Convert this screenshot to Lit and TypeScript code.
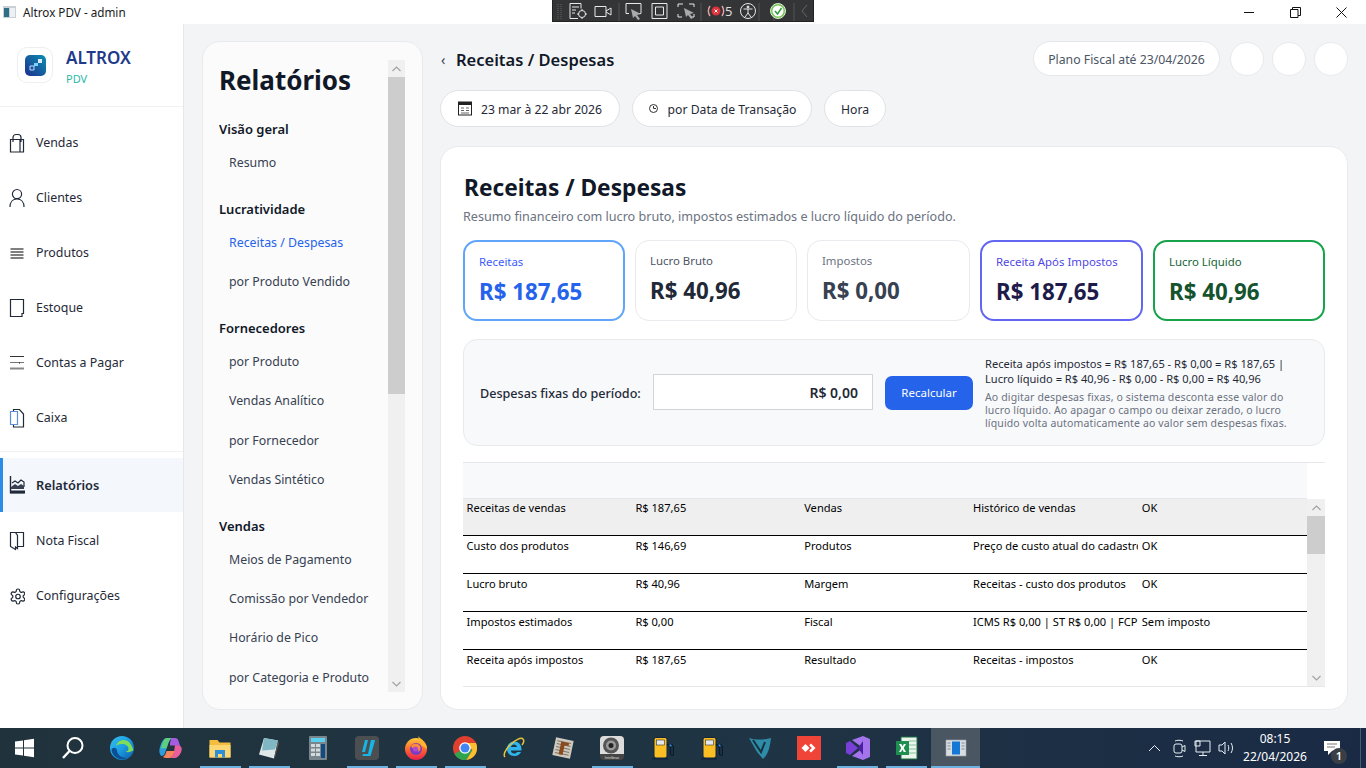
import { LitElement, html, css, svg } from 'lit';
import { customElement } from 'lit/decorators.js';

const line = (d: string, w = 1.2, c = '#1f2937') =>
  svg`<path d=${d} fill="none" stroke=${c} stroke-width=${w} />`;

const navIcons: Record<string, unknown> = {
  bag: svg`${line('M1.5 6.5h13v12.5h-13zM11 6.5v12.5M4 9V4.5a3 3 0 0 1 3-3h2a3 3 0 0 1 3 3V9')}`,
  user: svg`${line('M8 1.5a4.6 4.6 0 1 1 0 9.2a4.6 4.6 0 1 1 0-9.2zM1 19c0-5 3-8 7-8s7 3 7 8')}`,
  list: svg`${line('M1.500 6h13M1.500 9h13M1.500 12h13M1.500 15h13', 1.3, '#555')}`,
  box: svg`${line('M1.500 1.500h13v14l-1.500 0v3h-11.500zM10 18.500h3v-3', 1.2)}`,
  lines: svg`${line('M1 3.500h14', 1, '#333')}${line('M1 9.500h14', 1, '#777')}${line('M10 10h1', 1, '#111')}${line('M1 15.500h14', 2, '#888')}`,
  docs: svg`${line('M4.500 3.500v-2h6l4 4.500v13h-10v-2', 1.2)}${line('M1.500 3.500h7v13h-7z', 1.2, '#5b8fd8')}`,
  chart: svg`${line('M1.500 1v16.500h14', 1.4)}${line('M3 8l3-2 3 2 3-3 3 2v5', 1.2)}<path d="M2 12l4-3 3 2 3-2 3 2v3h-13z" fill="#374151" /><path d="M1 15.500h15v3h-15z" fill="#1f2937" />`,
  book: svg`${line('M1.500 1.500h5l2 3v13l-2-1.500v2.500l-5-3zM6.500 1.500h8v14h-6', 1.2)}`,
  gear: svg`<g transform="scale(.75) translate(0 2)"><path d="M12.22 2h-.44a2 2 0 0 0-2 2v.18a2 2 0 0 1-1 1.73l-.43.25a2 2 0 0 1-2 0l-.15-.08a2 2 0 0 0-2.73.73l-.22.38a2 2 0 0 0 .73 2.73l.15.1a2 2 0 0 1 1 1.72v.51a2 2 0 0 1-1 1.74l-.15.09a2 2 0 0 0-.73 2.73l.22.38a2 2 0 0 0 2.73.73l.15-.08a2 2 0 0 1 2 0l.43.25a2 2 0 0 1 1 1.73V20a2 2 0 0 0 2 2h.44a2 2 0 0 0 2-2v-.18a2 2 0 0 1 1-1.73l.43-.25a2 2 0 0 1 2 0l.15.08a2 2 0 0 0 2.73-.73l.22-.39a2 2 0 0 0-.73-2.73l-.15-.08a2 2 0 0 1-1-1.74v-.5a2 2 0 0 1 1-1.74l.15-.09a2 2 0 0 0 .73-2.73l-.22-.38a2 2 0 0 0-2.73-.73l-.15.08a2 2 0 0 1-2 0l-.43-.25a2 2 0 0 1-1-1.73V4a2 2 0 0 0-2-2z" fill="none" stroke="#1f2937" stroke-width="1.6" /><circle cx="12" cy="12" r="3" fill="none" stroke="#1f2937" stroke-width="1.6" /></g>`,
};

const navTop = [
  ['bag', 'Vendas'],
  ['user', 'Clientes'],
  ['list', 'Produtos'],
  ['box', 'Estoque'],
  ['lines', 'Contas a Pagar'],
  ['docs', 'Caixa'],
];
const navBottom = [
  ['chart', 'Relatórios', 'active'],
  ['book', 'Nota Fiscal'],
  ['gear', 'Configurações'],
];

const reportGroups = [
  { title: 'Visão geral', items: ['Resumo'] },
  { title: 'Lucratividade', items: ['Receitas / Despesas', 'por Produto Vendido'] },
  { title: 'Fornecedores', items: ['por Produto', 'Vendas Analítico', 'por Fornecedor', 'Vendas Sintético'] },
  { title: 'Vendas', items: ['Meios de Pagamento', 'Comissão por Vendedor', 'Horário de Pico', 'por Categoria e Produto'] },
];

const stats = [
  { cls: 'blue', label: 'Receitas', value: 'R$ 187,65' },
  { cls: '', label: 'Lucro Bruto', value: 'R$ 40,96' },
  { cls: 'muted', label: 'Impostos', value: 'R$ 0,00' },
  { cls: 'indigo', label: 'Receita Após Impostos', value: 'R$ 187,65' },
  { cls: 'green', label: 'Lucro Líquido', value: 'R$ 40,96' },
];

const rows = [
  ['Receitas de vendas', 'R$ 187,65', 'Vendas', 'Histórico de vendas', 'OK'],
  ['Custo dos produtos', 'R$ 146,69', 'Produtos', 'Preço de custo atual do cadastro', 'OK'],
  ['Lucro bruto', 'R$ 40,96', 'Margem', 'Receitas - custo dos produtos', 'OK'],
  ['Impostos estimados', 'R$ 0,00', 'Fiscal', 'ICMS R$ 0,00 | ST R$ 0,00 | FCP R$ 0,00', 'Sem imposto'],
  ['Receita após impostos', 'R$ 187,65', 'Resultado', 'Receitas - impostos', 'OK'],
];

const pump = svg`<path d="M2 22h16v1.500h-16z" fill="#10243c" /><rect x="4" y="1.500" width="13" height="20.500" rx="2" fill="#fbbf24" stroke="#10243c" /><rect x="6.500" y="4" width="8" height="5" fill="#e5e7eb" stroke="#333" stroke-width=".6" /><path d="M17 8l3.500 3v7a1.500 1.500 0 0 0 3 0v-7l-2-3" fill="none" stroke="#0b1a2c" stroke-width="1.200" /><circle cx="20.500" cy="9.500" r="1.100" fill="#2b8de8" />`;

const taskIcons: { run?: boolean; icon: unknown; active?: boolean }[] = [
  { icon: svg`<path d="M3 5.500l8-1.100v7.200h-8zM12 4.200l10-1.400v8.800h-10zM3 12.500h8v7.100l-8-1.100zM12 12.500h10v8.700l-10-1.400z" fill="#fff" />` },
  { icon: svg`<circle cx="14" cy="9.500" r="7.500" fill="none" stroke="#fff" stroke-width="2" /><path d="M8.500 15l-6.500 7" stroke="#fff" stroke-width="2.400" />` },
  { icon: svg`<defs><linearGradient id="ed" x1="0" y1="0" x2="1" y2="1"><stop offset="0" stop-color="#35c1f1" /><stop offset=".5" stop-color="#1b9de2" /><stop offset="1" stop-color="#0c59a4" /></linearGradient></defs><circle cx="12" cy="12" r="12" fill="url(#ed)" /><path d="M6 10c1-6 9-8 13-4 3 3 4 7 4.500 8-2 2-6 3-8 1.500 2 0 3-1 3-3 0-3-4-5-7.500-4.500-2 .3-4.500 1-5 2z" fill="#7edb5b" /><path d="M7 14c0 5 5 8.500 10 7.500-5 4-15 .5-15.500-8 1-2 4-3 5.500.5z" fill="#0d4f94" />` },
  { icon: svg`<path d="M8 2h5c-2 1-3 3-4 6l-3 9c-.5 2-2 3-3.500 3C0 18 0 14 1 11c1.500-5 3.500-9 7-9z" fill="#2d9cdb" /><path d="M8 2h5c-2 1-3 3-4 6l-1.500 4.500c-2-.5-4-.5-5.500 0C3 7 5 2 8 2z" fill="#5fce7c" /><path d="M12 2h4c2 0 3 1 3.500 3 .8 2 1.500 4 2 6-1-1-3-1.500-5.500-1.500h-5L11 7c.5-2 1-4 1-5z" fill="#a45de0" /><path d="M16 9c3 0 6 1 6.500 2.500.8 3-1 7-3.500 9-1 1-2.500 1.500-4 1.500h-4c2-1 3.500-3 4-6z" fill="#e85d9b" /><path d="M11 22c2-1 3.500-3 4.500-7h-8c-.5 3-2 5-3.500 6 1 .7 2 1 3 1z" fill="#f6845d" />` },
  { run: true, icon: svg`<path d="M1.500 4h8l2 2.500h11v15h-21z" fill="#f4bd3f" /><path d="M1.500 9h21v12.500h-21z" fill="#fcd774" /><path d="M7 14h10v7.500h-3v-3.500h-4v3.500h-3z" fill="#2e8fd6" />` },
  { run: true, icon: svg`<path d="M7 2l14 2.500-4 18-15-4z" fill="#dfe9ea" /><path d="M7 2l14 2.500-3 9-13 1z" fill="#7fb8c4" /><path d="M21 4.500l1 3-4 14-1 1z" fill="#5d5547" />` },
  { icon: svg`<rect x="3" y="0" width="18" height="24" rx="1" fill="#79868e" /><rect x="5" y="2" width="14" height="4" fill="#5bd0ee" /><path d="M5 8h4v3h-4zM10 8h4v3h-4zM5 12.500h4v3h-4zM10 12.500h4v3h-4zM5 17h4v3h-4zM10 17h4v3h-4z" fill="#d4d9dc" /><path d="M15 8h4v14h-4z" fill="#134a82" />` },
  { run: true, icon: svg`<rect width="24" height="24" rx="4" fill="#4c4f52" /><path d="M10 4h3l-3 12h-3zM16 4h4l-1 4-3.500 12h-8l.5-2h5z" fill="#14b8e8" />` },
  { run: true, icon: svg`<defs><linearGradient id="ff" x1="0" y1="0" x2="0" y2="1"><stop offset="0" stop-color="#ffcb3d" /><stop offset=".5" stop-color="#ff6a2b" /><stop offset="1" stop-color="#e8214f" /></linearGradient></defs><circle cx="12" cy="13" r="11" fill="url(#ff)" /><path d="M14 0c3 3 9 7 9 13l-6-4z" fill="#ffb52d" /><circle cx="12" cy="13" r="6" fill="#7b3bc4" /><path d="M7 10c2-3 7-3 9 0 1 2 .5 5-2 6 1-2 0-4-2-4-2.500 0-3 1.500-5-2z" fill="#ff8a3a" /><circle cx="11.500" cy="13" r="2.600" fill="#b04bd0" />` },
  { run: true, icon: svg`<circle cx="12" cy="12" r="12" fill="#e0402f" /><path d="M12 12l-10.500 6a12 12 0 0 0 12 6l6-10z" fill="#2fa44f" /><path d="M12 7h11a12 12 0 0 1-9.500 17l6-10z" fill="#fbc02d" /><circle cx="12" cy="12" r="5.800" fill="#fff" /><circle cx="12" cy="12" r="4.500" fill="#4285f4" />` },
  { icon: svg`<path d="M12 5.500a7 7 0 0 0-7 7.500c0 4 3 7 7.500 7 3.500 0 5.500-1.800 6.500-4h-4c-.7 1-1.500 1.500-2.800 1.500-1.800 0-3.200-1-3.300-3h10.500c.6-5.500-2.900-9-6.900-9zM9 11c.2-1.500 1.500-2.500 3-2.500s2.800 1 3 2.500z" fill="#2fb5ec" /><path d="M3 21c-2-2 0-7 5-12 5-5 11-8 13-6 1.500 1.500 .5 4-1 6" fill="none" stroke="#e8c33a" stroke-width="1.500" />` },
  { icon: svg`<g transform="rotate(12 12 12)"><rect x="3" y="3" width="18" height="18" fill="#cfc9bd" /><path d="M5 6h14M5 9h14M5 12h14M5 15h14M5 18h14" stroke="#7c756a" /><path d="M9 6h8v3h-4v10h-4z" fill="#8a4a1c" /></g>` },
  { run: true, icon: svg`<rect x="0" y="0" width="24" height="24" rx="4" fill="#444" /><path d="M0 4a4 4 0 0 1 4-4h16a4 4 0 0 1 4 4v14h-24z" fill="#dcdcdc" /><circle cx="11" cy="9.500" r="8" fill="#555" /><circle cx="11" cy="9.500" r="5" fill="#9a9a9a" /><circle cx="11" cy="9.500" r="2.500" fill="#222" /><text x="12" y="22.800" text-anchor="middle" font-size="3.800" fill="#ddd" font-family="Liberation Sans, sans-serif">Intelbras</text>` },
  { icon: pump },
  { icon: pump },
  { icon: svg`<path d="M1 2c7 2 15 2 22 0-1 9-3 17-8 21l-6-7z" fill="#2f8ca8" /><path d="M5 4l8 12 4-10" fill="none" stroke="#16323f" stroke-width="2" />` },
  { icon: svg`<rect width="24" height="24" fill="#f04438" /><path d="M8.500 8l4 4-4 4-4-4z" fill="#fff" /><path d="M14 7.500l4.500 4.500-4.500 4.500-1.800-1.800 2.700-2.700-2.700-2.700z" fill="#fff" />` },
  { run: true, icon: svg`<path d="M0 7l4-2 8 7-8 7-4-2z" fill="#7a3fd8" /><path d="M6 4l11-4 7 3v18l-7 3-11-4 11-8z" fill="#a374ec" /><path d="M12 12l5-7v14z" fill="#4b1fa0" />` },
  { run: true, icon: svg`<path d="M6 1h16v22h-16z" fill="#eaf5ec" stroke="#1d6f42" /><path d="M14 5h7M14 9h7M14 13h7M14 17h7" stroke="#88bf9b" /><path d="M1 5h13v14h-13z" fill="#1f8f4f" /><path d="M4 8h2.300l1.300 2.300 1.300-2.300h2.100l-2.300 4 2.300 4h-2.300l-1.300-2.400-1.400 2.400h-2l2.300-4z" fill="#fff" />` },
  { run: true, active: true, icon: svg`<rect x="2" y="4" width="20" height="16" fill="#d8dde2" stroke="#99a3ad" stroke-width=".6" /><rect x="8" y="5.500" width="8" height="13" fill="#1478d4" /><path d="M3.500 7h3M3.500 10h3M3.500 13h3M17.500 7h3M17.500 10h3M17.500 13h3" stroke="#7f8a94" />` },
];

@customElement('app-root')
export class AppRoot extends LitElement {
  static styles = css`
    :host {
      display: flex;
      flex-direction: column;
      position: relative;
      width: 1366px;
      height: 768px;
      overflow: hidden;
      font-family: "Noto Sans", "Open Sans", sans-serif;
      color: #111827;
      background: #f3f4f6;
    }
    * { box-sizing: border-box; }

    .titlebar {
      height: 24px;
      flex: none;
      background: #fff;
      display: flex;
      align-items: center;
      font-size: 11.700px;
      padding-left: 3px;
      gap: 7px;
      color: #1a1a1a;
    }
    .winicon { width: 13px; height: 12px; }
    .winbtns { margin-left: auto; display: flex; padding-right: 2px; }
    .winbtn { width: 46px; height: 24px; display: flex; align-items: center; justify-content: center; }

    .recorder {
      position: absolute;
      left: 552px;
      top: 0;
      width: 262px;
      height: 22px;
      background: #333537;
      border: 1px solid #222;
      border-top: none;
    }
    .recorder svg { display: block; }

    .body { flex: 1; display: flex; min-height: 0; }

    .side {
      width: 184px;
      flex: none;
      background: #fff;
      border-right: 1px solid #e5e7eb;
    }
    .brand {
      height: 83px;
      border-bottom: 1px solid #f0f1f3;
      display: flex;
      align-items: center;
      padding-left: 17px;
      gap: 13px;
    }
    .logo {
      width: 36px;
      height: 36px;
      border: 1px solid #eceef1;
      border-radius: 10px;
      display: flex;
      align-items: center;
      justify-content: center;
    }
    .brandtext { padding-top: 4px; }
    .brand b { display: block; font-size: 17px; line-height: 22px; font-weight: 600; color: #1e3a8a; margin-top: -2px; }
    .brand span { display: block; font-size: 11px; line-height: 14px; color: #2bb8a8; margin-top: 3px; }
    .nav { padding-top: 8px; }
    .nav.low { border-top: 1px solid #f0f1f3; margin-top: 6px; padding-top: 6px; }
    .navitem {
      height: 55px;
      display: flex;
      align-items: center;
      padding-left: 9px;
      gap: 11px;
      font-size: 12.400px;
      color: #1f2937;
    }
    .navitem svg { flex: none; }
    .navitem.active {
      height: 54px;
      margin-bottom: 1px;
      background: #f4f7fc;
      border-left: 3px solid #2b8de8;
      padding-left: 6px;
      font-size: 12.800px;
      font-weight: 600;
    }

    .content { flex: 1; display: flex; gap: 17px; padding: 17px 18px 18px; min-width: 0; }

    .reports {
      width: 221px;
      flex: none;
      background: #fbfbfc;
      border: 1px solid #e8eaed;
      border-radius: 18px;
      padding: 18px 17px 17px 16px;
      display: flex;
    }
    .replist { flex: 1; overflow: hidden; min-width: 0; }
    .replist h1 { margin: 1px 0 0; font-size: 26px; line-height: 38px; font-weight: 700; color: #111827; }
    .group { margin-top: 17.200px; }
    .group:first-of-type { margin-top: 20px; }
    .group h2 { margin: 0 0 3.500px; font-size: 13px; line-height: 20px; font-weight: 600; color: #111827; }
    .repitem {
      height: 39.300px;
      display: flex;
      align-items: center;
      padding-left: 10px;
      font-size: 12.350px;
      color: #374151;
      white-space: nowrap;
    }
    .repitem.on { color: #2563eb; }

    .sbar { width: 17px; flex: none; background: #f0f0f0; display: flex; flex-direction: column; align-items: center; }
    .sbar .arrow { height: 17px; flex: none; display: flex; align-items: center; justify-content: center; width: 100%; }
    .sbar .thumb { width: 100%; background: #cdcdcd; flex: none; }
    .sbar .fill { flex: 1; }

    .main { flex: 1; display: flex; flex-direction: column; min-width: 0; }
    .top { height: 35px; display: flex; align-items: center; flex: none; }
    .back { width: 16px; font-size: 14px; color: #374151; padding: 2px 0 0 1px; }
    .top h2 { margin: 0; padding-top: 2px; font-size: 16.500px; font-weight: 600; color: #111827; }
    .plan {
      margin-left: auto;
      height: 35px;
      width: 187px;
      justify-content: center;
      padding-top: 2px;
      display: flex;
      align-items: center;
      background: #fff;
      border: 1px solid #e5e7eb;
      border-radius: 18px;
      font-size: 12.250px;
      color: #4b5563;
    }
    .circle { width: 34px; height: 34px; border-radius: 50%; background: #fff; border: 1px solid #e8eaed; margin-left: 8px; flex: none; }
    .plan + .circle { margin-left: 10px; }

    .filters { display: flex; gap: 12px; margin-top: 14px; flex: none; }
    .pill {
      height: 37px;
      display: flex;
      align-items: center;
      justify-content: center;
      gap: 9px;
      padding-top: 2px;
      background: #fff;
      border: 1px solid #dfe2e6;
      border-radius: 19px;
      font-size: 12.200px;
      color: #1f2937;
    }
    .pill svg { margin-top: -2px; }
    .pill.a { width: 180px; }
    .pill.b { width: 180px; }
    .pill.c { width: 62px; }

    .card {
      flex: 1;
      margin-top: 19px;
      background: #fff;
      border: 1px solid #e8eaed;
      border-radius: 18px;
      padding: 25px 22px 22px;
      min-height: 0;
    }
    .card h3 { margin: 0 0 0 1px; font-size: 22.700px; line-height: 32px; font-weight: 700; color: #111827; }
    .sub { margin: 4px 0 0; font-size: 12.600px; line-height: 18px; color: #6b7280; }

    .stats { display: grid; grid-template-columns: 162px 162px 163px 163px 172px; gap: 10px; margin-top: 14px; }
    .stat {
      height: 81px;
      border: 1px solid #e8eaed;
      border-radius: 14px;
      padding: 11px 14px;
    }
    .stat .l { font-size: 11.400px; line-height: 17px; color: #4b5563; }
    .stat .v { font-size: 22.300px; line-height: 30px; font-weight: 700; color: #1f2937; margin-top: 7px; }
    .stat.muted .l { color: #6b7280; }
    .stat.muted .v { color: #374151; }
    .stat.blue { border: 2px solid #60a5fa; }
    .stat.blue .l { color: #3b5bfd; }
    .stat.blue .v { color: #2563eb; }
    .stat.indigo { border: 2px solid #6366f1; }
    .stat.indigo .l { color: #4f46e5; }
    .stat.indigo .v { color: #1e1b4b; }
    .stat.green { border: 2px solid #16a34a; }
    .stat.green .l { color: #166534; }
    .stat.green .v { color: #14532d; }

    .fixed {
      height: 107px;
      margin-top: 18px;
      background: #f8f9fb;
      border: 1px solid #e8eaed;
      border-radius: 14px;
      display: flex;
      align-items: center;
      padding: 0 16px;
    }
    .fixed label { font-size: 12.600px; font-weight: 500; color: #1f2937; white-space: nowrap; width: 173px; flex: none; padding-top: 2px; }
    .field {
      width: 220px;
      height: 36px;
      flex: none;
      margin-top: -1px;
      background: #fff;
      border: 1px solid #d1d5db;
      display: flex;
      align-items: center;
      justify-content: flex-end;
      padding-right: 14px;
      font-size: 14px;
      font-weight: 600;
      color: #1f2937;
    }
    .recalc {
      width: 88px;
      height: 34px;
      flex: none;
      margin-left: 12px;
      background: #2563eb;
      color: #fff;
      border: none;
      border-radius: 7px;
      font: inherit;
      font-size: 11.500px;
    }
    .calc { margin-left: 12px; width: 310px; flex: none; padding-top: 1px; }
    .calc p { margin: 0; font-size: 11.100px; line-height: 15px; color: #1f2937; white-space: nowrap; }
    .calc small { display: block; margin-top: 5px; font-size: 10.500px; letter-spacing: .14px; line-height: 13px; color: #6b7280; }

    .grid {
      height: 225px;
      margin-top: 16px;
      border-top: 1px solid #e5e7eb;
      border-bottom: 1px solid #e5e7eb;
      display: flex;
      overflow: hidden;
    }
    table { width: 844px; flex: none; table-layout: fixed; border-collapse: separate; border-spacing: 0; font-size: 11.100px; color: #000; }
    thead th { height: 36px; background: #f8f9fb; border-bottom: 1px solid #e5e7eb; padding: 0; }
    tbody td {
      height: 38px;
      padding: 2px 3px 0 3.600px;
      line-height: 16px;
      vertical-align: top;
      white-space: nowrap;
      overflow: hidden;
      border-bottom: 1px solid #000;
    }
    tbody tr:first-child td { height: 37px; padding-top: 1px; background: #efefef; }
    tbody tr:last-child td { border-bottom: none; }
    .gridbar { width: 18px; flex: none; display: flex; flex-direction: column; }
    .gridbar .blank { height: 36px; flex: none; }
    .gridbar .sbar { flex: 1; width: 18px; }

    .taskbar {
      height: 40px;
      flex: none;
      background: linear-gradient(90deg, #20333d 0%, #1f3444 55%, #1a2a45 100%);
      display: flex;
      color: #fff;
    }
    .task {
      width: 49.060px;
      height: 40px;
      flex: none;
      display: flex;
      align-items: center;
      justify-content: center;
      position: relative;
    }
    .task:nth-child(1), .task:nth-child(2) { width: 48.750px; }
    .task.run::after {
      content: "";
      position: absolute;
      left: 4px;
      right: 4px;
      bottom: 0;
      height: 2px;
      background: #6cb1e0;
    }
    .task.active { background: #4a5662; }
    .task.active::after { left: 0; right: 0; }
    .tray { margin: 0 5px 0 auto; display: flex; align-items: center; padding-right: 10px; border-right: 1px solid #4a5a70; }
    .tray svg { display: block; }
    .clock { width: 78px; text-align: center; font-size: 12px; line-height: 18px; }
    .notif { width: 36px; height: 40px; position: relative; display: flex; align-items: center; justify-content: center; }
    .badge {
      position: absolute;
      right: 3px;
      bottom: 4px;
      width: 16px;
      height: 16px;
      border-radius: 50%;
      background: #3a3f45;
      font-size: 11px;
      font-weight: 600;
      line-height: 16px;
      text-align: center;
    }
  `;

  private scrollbar(thumbH: number) {
    return html`<div class="sbar">
      <div class="arrow"><svg width="9" height="6"><path d="M.5 5l4-4 4 4" fill="none" stroke="#a3a3a3" stroke-width="1.200" /></svg></div>
      <div class="thumb" style="height:${thumbH}px"></div>
      <div class="fill"></div>
      <div class="arrow"><svg width="9" height="6"><path d="M.5 1l4 4 4-4" fill="none" stroke="#a3a3a3" stroke-width="1.200" /></svg></div>
    </div>`;
  }

  private navItem(n: string[]) {
    return html`<div class="navitem ${n[2] ?? ''}">
      <svg width="16" height="20" viewBox="0 0 16 20">${navIcons[n[0]]}</svg>${n[1]}
    </div>`;
  }

  render() {
    return html`
      <div class="titlebar">
        <svg class="winicon" viewBox="0 0 13 12"><rect width="13" height="12" fill="#c9d1d6" /><rect x="1" y="2" width="5" height="9" fill="#2f6f86" /><rect x="7" y="2" width="5" height="9" fill="#eef1f3" /></svg>
        Altrox PDV - admin
        <div class="winbtns">
          <div class="winbtn"><svg width="11" height="11"><path d="M0 5.500h10" stroke="#111" /></svg></div>
          <div class="winbtn"><svg width="11" height="11"><path d="M.5 2.500h7.500v8h-7.500zM2.500 2.500v-2h8v8h-2.500" fill="none" stroke="#111" /></svg></div>
          <div class="winbtn"><svg width="11" height="11"><path d="M.5.500l10 10M10.500.500l-10 10" stroke="#111" /></svg></div>
        </div>
      </div>

      <div class="recorder">
        <svg width="262" height="22" viewBox="0 0 262 22" fill="none" stroke="#e8e8e8">
          <path d="M5 4v15M8 4v15" stroke="#666" stroke-dasharray="1 1" />
          <path d="M17 3.500h11v5M17 3.500v15h8M19 7h7M19 10h4M19 13h3" />
          <circle cx="29" cy="14" r="3.500" /><path d="M29 9v2M29 17v2M24 14h2M32 14h2" />
          <path d="M42 6.500h11v10h-11zM53 11l5-3v7l-5-3" />
          <path d="M66 3v18M148 3v18M206 3v18M221 3v18M241 3v18" stroke="#555" />
          <path d="M73 3.500h15v10h-6M73 3.500v10h3" />
          <path d="M78 9l10 5-4 1 3 4-2 1-3-4-2 2z" fill="#aaa" stroke="none" />
          <path d="M99 3.500h15v15h-15zM102.500 7h8v8h-8z" />
          <path d="M125 7v-3h5M136 4h5v3M125 14v3h4M141 14v3h-3" />
          <path d="M131 8l10 5-4 1 3 4-2 1-3-4-2 2z" fill="#aaa" stroke="none" />
          <circle cx="163" cy="11" r="4.500" fill="#e0303a" stroke="none" />
          <path d="M161.500 9.500l3 3M164.500 9.500l-3 3" stroke="#fff" />
          <path d="M157 6c-2 3-2 7 0 10M169 6c2 3 2 7 0 10" stroke="#e8a0a0" stroke-width="1.400" />
          <text x="172" y="16" font-size="13" fill="#ddd" stroke="none" font-family="Noto Sans, sans-serif">5</text>
          <circle cx="195" cy="11" r="7.500" /><circle cx="195" cy="7" r="1" fill="#e8e8e8" /><path d="M190.500 9h9M195 9v4M195 13l-3 4M195 13l3 4" />
          <circle cx="225" cy="11" r="7.500" fill="#7cc65c" stroke="#d8efd0" />
          <circle cx="225" cy="11" r="5.500" fill="#fff" stroke="none" />
          <path d="M222 11l2.500 3 4-6" stroke="#2f9e44" stroke-width="1.500" />
          <path d="M254 5l-5 6 5 6" stroke="#666" />
        </svg>
      </div>

      <div class="body">
        <aside class="side">
          <div class="brand">
            <div class="logo">
              <svg width="21" height="21" viewBox="0 0 21 21">
                <defs><linearGradient id="lg" x1="0" y1="1" x2="1" y2="0"><stop offset="0" stop-color="#1e2f8f" /><stop offset="1" stop-color="#0a8fb0" /></linearGradient></defs>
                <rect width="21" height="21" rx="5" fill="url(#lg)" />
                <path d="M13 4h4v4h-4z" fill="#dbeafe" /><path d="M9 8h4v3h-4z" fill="#7dd3fc" /><path d="M5 11h4v4h-4z" fill="none" stroke="#bfdbfe" />
              </svg>
            </div>
            <div class="brandtext"><b>ALTROX</b><span>PDV</span></div>
          </div>
          <div class="nav">${navTop.map((n) => this.navItem(n))}</div>
          <div class="nav low">${navBottom.map((n) => this.navItem(n))}</div>
        </aside>

        <div class="content">
          <section class="reports">
            <div class="replist">
              <h1>Relatórios</h1>
              ${reportGroups.map(
                (g) => html`<div class="group">
                  <h2>${g.title}</h2>
                  ${g.items.map((i) => html`<div class="repitem ${i === 'Receitas / Despesas' ? 'on' : ''}">${i}</div>`)}
                </div>`
              )}
            </div>
            ${this.scrollbar(317)}
          </section>

          <div class="main">
            <div class="top">
              <span class="back">‹</span>
              <h2>Receitas / Despesas</h2>
              <div class="plan">Plano Fiscal até 23/04/2026</div>
              <div class="circle"></div><div class="circle"></div><div class="circle"></div>
            </div>

            <div class="filters">
              <div class="pill a">
                <svg width="14" height="15" viewBox="0 0 14 15"><rect x=".5" y="1" width="13" height="13" fill="#fff" stroke="#222" /><rect x=".5" y="1" width="13" height="3" fill="#222" /><path d="M3 7h3M8 7h3M3 9.500h3M8 9.500h3M3 12h8" stroke="#666" /></svg>
                23 mar à 22 abr 2026
              </div>
              <div class="pill b">
                <svg width="11" height="11" viewBox="0 0 11 11"><circle cx="5.500" cy="5.500" r="4" fill="none" stroke="#333" /><path d="M5.500 3v2.500h2.500" fill="none" stroke="#333" /></svg>
                por Data de Transação
              </div>
              <div class="pill c">Hora</div>
            </div>

            <div class="card">
              <h3>Receitas / Despesas</h3>
              <p class="sub">Resumo financeiro com lucro bruto, impostos estimados e lucro líquido do período.</p>

              <div class="stats">
                ${stats.map(
                  (s) => html`<div class="stat ${s.cls}"><div class="l">${s.label}</div><div class="v">${s.value}</div></div>`
                )}
              </div>

              <div class="fixed">
                <label>Despesas fixas do período:</label>
                <div class="field">R$ 0,00</div>
                <button class="recalc">Recalcular</button>
                <div class="calc">
                  <p>Receita após impostos = R$ 187,65 - R$ 0,00 = R$ 187,65 |<br />Lucro líquido = R$ 40,96 - R$ 0,00 - R$ 0,00 = R$ 40,96</p>
                  <small>Ao digitar despesas fixas, o sistema desconta esse valor do<br />lucro líquido. Ao apagar o campo ou deixar zerado, o lucro<br />líquido volta automaticamente ao valor sem despesas fixas.</small>
                </div>
              </div>

              <div class="grid">
                <table>
                  <thead><tr><th></th><th></th><th></th><th></th><th></th></tr></thead>
                  <tbody>
                    ${rows.map((r) => html`<tr>${r.map((c) => html`<td>${c}</td>`)}</tr>`)}
                  </tbody>
                </table>
                <div class="gridbar">
                  <div class="blank"></div>
                  ${this.scrollbar(38)}
                </div>
              </div>
            </div>
          </div>
        </div>
      </div>

      <footer class="taskbar">
        ${taskIcons.map(
          (t) => html`<div class="task ${t.run ? 'run' : ''} ${t.active ? 'active' : ''}"><svg width="24" height="24" viewBox="0 0 24 24">${t.icon}</svg></div>`
        )}
        <div class="tray">
          <svg width="88" height="20" viewBox="0 0 88 20" fill="none" stroke="#e8eef4">
            <path d="M1 13l5.500-5.500 5.500 5.500" />
            <rect x="26" y="6" width="8" height="9" rx="2" /><path d="M34 9l3-1.500v6l-3-1.500M27 3c2-1 6-1 8 0M27 18c2 1 6 1 8 0" />
            <path d="M48 3h14v11h-14zM55 14v3M51 17.500h8M47 3h5v5h-5z" />
            <path d="M71 7v6h3l3 3v-12l-3 3zM80 7c1 2 1 4 0 6M83 5c2 3 2 7 0 10" />
          </svg>
          <div class="clock">08:15<br />22/04/2026</div>
          <div class="notif">
            <svg width="16" height="14" viewBox="0 0 16 14"><path d="M0 0h16v10h-8l-4 4v-4h-4z" fill="#fff" /><path d="M3 3h10M3 6h8" stroke="#777" /></svg>
            <span class="badge">1</span>
          </div>
        </div>
      </footer>
    `;
  }
}

declare global {
  interface HTMLElementTagNameMap {
    'app-root': AppRoot;
  }
}
